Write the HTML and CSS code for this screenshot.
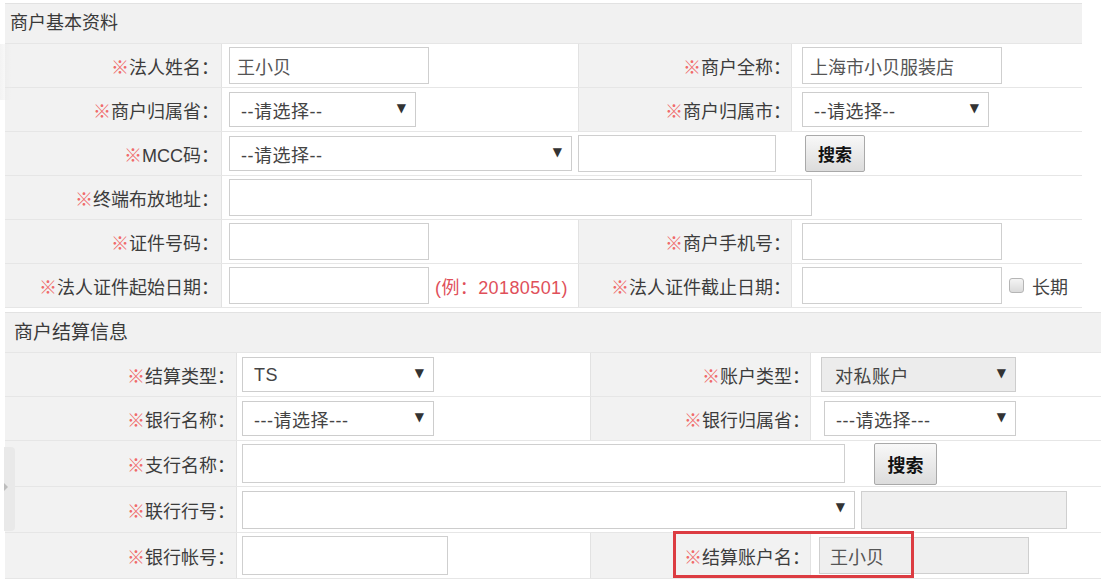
FILE: index.html
```html
<!DOCTYPE html>
<html lang="zh-CN">
<head>
<meta charset="utf-8">
<title>商户资料</title>
<link rel="stylesheet" href="styles.css">
</head>
<body>
<div class="page">
  <section class="tbl t1">
    <div class="head">商户基本资料</div>
    <div class="row">
      <div class="lab"><em>※</em>法人姓名：</div>
      <div class="val"><div class="inp w200">王小贝</div></div>
      <div class="lab"><em>※</em>商户全称：</div>
      <div class="val v2"><div class="inp w200">上海市小贝服装店</div></div>
    </div>
    <div class="row">
      <div class="lab"><em>※</em>商户归属省：</div>
      <div class="val"><div class="sel w187"><span class="st">--请选择--</span><span class="ar">▼</span></div></div>
      <div class="lab"><em>※</em>商户归属市：</div>
      <div class="val v2"><div class="sel w187"><span class="st">--请选择--</span><span class="ar">▼</span></div></div>
    </div>
    <div class="row">
      <div class="lab"><em>※</em>MCC码：</div>
      <div class="val span3">
        <div class="sel w343"><span class="st">--请选择--</span><span class="ar">▼</span></div>
        <div class="inp w198 ml6"></div>
        <button class="btn ml29">搜索</button>
      </div>
    </div>
    <div class="row">
      <div class="lab"><em>※</em>终端布放地址：</div>
      <div class="val span3"><div class="inp w583"></div></div>
    </div>
    <div class="row">
      <div class="lab"><em>※</em>证件号码：</div>
      <div class="val"><div class="inp w200"></div></div>
      <div class="lab"><em>※</em>商户手机号：</div>
      <div class="val v2"><div class="inp w200"></div></div>
    </div>
    <div class="row">
      <div class="lab"><em>※</em>法人证件起始日期：</div>
      <div class="val"><div class="inp w200"></div><span class="hint">(例：20180501)</span></div>
      <div class="lab"><em>※</em>法人证件截止日期：</div>
      <div class="val v2"><div class="inp w200"></div><span class="chk"></span><span class="chk-text">长期</span></div>
    </div>
  </section>

  <section class="tbl t2">
    <div class="head">商户结算信息</div>
    <div class="row">
      <div class="lab"><em>※</em>结算类型：</div>
      <div class="val"><div class="sel w192"><span class="st lat">TS</span><span class="ar">▼</span></div></div>
      <div class="lab"><em>※</em>账户类型：</div>
      <div class="val v2"><div class="sel w195 dis"><span class="st">对私账户</span><span class="ar">▼</span></div></div>
    </div>
    <div class="row">
      <div class="lab"><em>※</em>银行名称：</div>
      <div class="val"><div class="sel w192"><span class="st">---请选择---</span><span class="ar">▼</span></div></div>
      <div class="lab"><em>※</em>银行归属省：</div>
      <div class="val v2"><div class="sel w192 ml3"><span class="st">---请选择---</span><span class="ar">▼</span></div></div>
    </div>
    <div class="row tall">
      <div class="lab"><em>※</em>支行名称：</div>
      <div class="val span3">
        <div class="inp w603 h39"></div>
        <button class="btn bt2 ml29">搜索</button>
      </div>
    </div>
    <div class="row tall">
      <div class="lab"><em>※</em>联行行号：</div>
      <div class="val span3">
        <div class="sel w613 h38"><span class="st"></span><span class="ar">▼</span></div>
        <div class="inp w206 h38 ml6 dis"></div>
      </div>
    </div>
    <div class="row tall">
      <div class="lab"><em>※</em>银行帐号：</div>
      <div class="val"><div class="inp w206 h39"></div></div>
      <div class="lab"><em>※</em>结算账户名：</div>
      <div class="val v2"><div class="inp w210 dis ml-2">王小贝</div></div>
      <div class="mark"></div>
    </div>
  </section>

  <div class="sidetab tab1"></div>
  <div class="sidetab tab2"><span class="tri"></span></div>
</div>
</body>
</html>
```

FILE: styles.css
```css
html, body {
  margin: 0;
  padding: 0;
  background: #fff;
  overflow: hidden;
}

body {
  font-family: "Liberation Sans", "Noto Sans CJK SC", sans-serif;
  color: #3c3c3c;
  font-size: 18px;
}

.page {
  position: relative;
  padding: 3px 0 0 5px;
}

.tbl {
  display: flex;
  flex-direction: column;
  border-top: 1px solid #e2e2e2;
}

.t1 { width: 1077px; }
.t2 { width: 1100px; margin-top: 4px; }

.head {
  background: #f1f1f1;
  height: 39px;
  line-height: 39px;
  padding-left: 5px;
  font-size: 18px;
  color: #3a3a3a;
  border-bottom: 1px solid #e6e6e6;
}
.t2 .head { padding-left: 9px; font-size: 19px; }

.row {
  position: relative;
  display: grid;
  height: 43px;
  border-bottom: 1px solid #e6e6e6;
}
.t1 .row { grid-template-columns: 217px 356px 214px 290px; }
.t2 .row { grid-template-columns: 232px 353px 221px 294px; height: 43px; }
.t2 .row.tall { height: 45px; }

.lab {
  background: #f2f2f2;
  display: flex;
  align-items: center;
  justify-content: flex-end;
  padding-right: 2px;
  border-right: 1px solid #e2e2e2;
  white-space: nowrap;
  font-size: 18px;
}
.t1 .lab + .val + .lab { border-left: 1px solid #e2e2e2; padding-right: 0; }
.t2 .lab { padding-right: 1px; }
.t2 .lab + .val + .lab { border-left: 1px solid #e2e2e2; padding-right: 0; }

.lab em {
  font-style: normal;
  color: #f06a6a;
}

.val {
  display: flex;
  align-items: center;
  padding-left: 7px;
}
.val.v2 { padding-left: 10px; }
.t2 .val { padding-left: 5px; }
.t2 .val.v2 { padding-left: 10px; }
.span3 { grid-column: span 3; }

.inp {
  box-sizing: border-box;
  height: 37px;
  border: 1px solid #cfcfcf;
  background: #fff;
  padding-left: 7px;
  display: flex;
  align-items: center;
  font-size: 18px;
  color: #555;
}
.inp.dis { background: #efefef; color: #555; padding-left: 10px; }
.h38 { height: 38px; }
.h39 { height: 39px; }

.sel {
  box-sizing: border-box;
  height: 35px;
  border: 1px solid #cdcdcd;
  background: #fff;
  display: flex;
  justify-content: space-between;
  align-items: flex-start;
  padding: 0 9px 0 11px;
  color: #444;
}
.sel.dis { background: #ececec; padding-left: 13px; }
.sel.h38 { height: 38px; }
.sel .st {
  font-size: 18px;
  letter-spacing: 0.5px;
  padding-top: 6px;
  line-height: 26px;
}
.sel .st.lat { padding-top: 4px; }
.sel .ar {
  font-family: "DejaVu Sans", sans-serif;
  font-size: 12px;
  padding-top: 8px;
  color: #333;
}

.w187 { width: 187px; }
.w192 { width: 192px; }
.w195 { width: 195px; }
.w198 { width: 198px; }
.w200 { width: 200px; }
.w206 { width: 206px; }
.w210 { width: 210px; }
.w343 { width: 343px; }
.w583 { width: 583px; }
.w603 { width: 603px; }
.w613 { width: 613px; }
.ml6 { margin-left: 6px; }
.ml3 { margin-left: 3px; }
.ml29 { margin-left: 29px; }
.ml-2 { margin-left: -2px; }

.btn {
  box-sizing: border-box;
  width: 60px;
  height: 37px;
  border: 1px solid #a9a9a9;
  border-radius: 2px;
  background: linear-gradient(#f8f8f8, #dcdcdc);
  font-family: "Noto Sans CJK SC", sans-serif;
  font-size: 17px;
  font-weight: 700;
  color: #111;
  padding: 0;
}
.btn.bt2 { width: 63px; height: 42px; font-size: 18px; }

.hint {
  margin-left: 6px;
  color: #e0505a;
  font-size: 18px;
  letter-spacing: 0.4px;
  white-space: nowrap;
}

.chk {
  box-sizing: border-box;
  width: 15px;
  height: 15px;
  margin-left: 7px;
  border: 1px solid #b5b5b5;
  border-radius: 3px;
  background: linear-gradient(#f4f4f4, #dadada);
}
.chk-text {
  margin-left: 8px;
  font-size: 18px;
  color: #444;
}

.mark {
  position: absolute;
  left: 668px;
  top: -2px;
  width: 241px;
  height: 47px;
  border: 3px solid #dc3c42;
  box-sizing: border-box;
  pointer-events: none;
}

.sidetab {
  position: absolute;
  left: 0;
  border-radius: 0 4px 4px 0;
}
.tab1 {
  top: 44px;
  width: 12px;
  height: 56px;
  background: linear-gradient(90deg, rgba(225,225,225,0.4), rgba(245,245,245,0.1));
}
.tab2 {
  top: 447px;
  left: 4px;
  width: 11px;
  height: 84px;
  background: #e9e9e9;
}
.tri {
  position: absolute;
  left: 0;
  top: 36px;
  width: 0;
  height: 0;
  border-top: 4px solid transparent;
  border-bottom: 4px solid transparent;
  border-left: 4px solid #bdbdbd;
}
```
